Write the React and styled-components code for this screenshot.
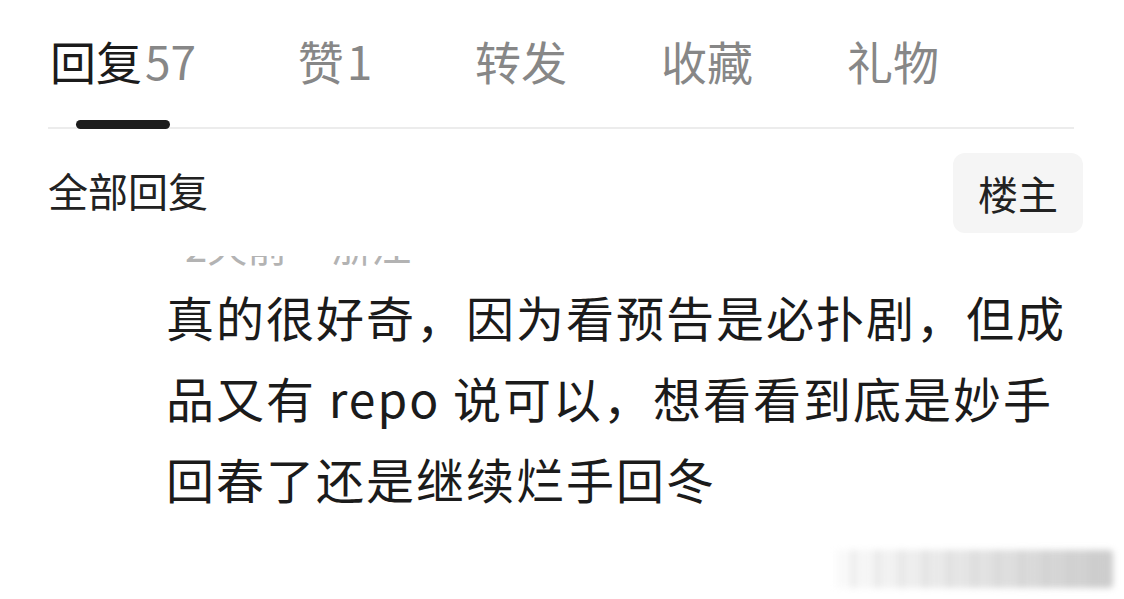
import React from "react";
import styled, { createGlobalStyle } from "styled-components";

const FONT = `"Noto Sans CJK SC", "Noto Sans", sans-serif`;

const tabs = [
	{ label: "回复", count: 57, active: true },
	{ label: "赞", count: 1 },
	{ label: "转发" },
	{ label: "收藏" },
	{ label: "礼物" },
];

const App = () => {
	return (
		<Page>
			<GlobalStyle />
			<TabBar>
				{tabs.map((tab) => (
					<Tab key={tab.label}>
						<TabLabel $active={tab.active}>
							{tab.label}
							{tab.count !== undefined && <Count>{tab.count}</Count>}
						</TabLabel>
						<Indicator $active={tab.active} />
					</Tab>
				))}
			</TabBar>

			<FilterRow>
				<FilterLabel>全部回复</FilterLabel>
				<OwnerButton>楼主</OwnerButton>
			</FilterRow>

			<MetaClip>
				<Meta>
					2天前<Location>浙江</Location>
				</Meta>
			</MetaClip>

			<Comment>
				真的很好奇，因为看预告是必扑剧，但成品又有 repo 说可以，想看看到底是妙手回春了还是继续烂手回冬
			</Comment>

			<Watermark />
		</Page>
	);
};

const GlobalStyle = createGlobalStyle`
	html, body {
		margin: 0;
		padding: 0;
		background: #ffffff;
	}
	body {
		font-family: ${FONT};
	}
`;

const Page = styled.div`
	position: relative;
	width: 1124px;
	height: 599px;
	overflow: hidden;
	background: #ffffff;
	font-family: ${FONT};
`;

const TabBar = styled.div`
	display: flex;
	gap: 92px;
	margin: 0 50px 0 48px;
	padding: 37px 0 0 2px;
	border-bottom: 2px solid #ececec;
`;

const Tab = styled.div`
	display: flex;
	flex-direction: column;
	align-items: center;
`;

const TabLabel = styled.div`
	font-size: 46px;
	line-height: 46px;
	white-space: nowrap;
	color: ${(props) => (props.$active ? "#1b1b1b" : "#878787")};
`;

const Count = styled.span`
	margin-left: 3px;
	color: #878787;
`;

const Indicator = styled.div`
	width: 94px;
	height: 9px;
	margin-top: 37px;
	margin-bottom: -2px;
	border-radius: 5px;
	background: ${(props) => (props.$active ? "#1c1c1c" : "transparent")};
`;

const FilterRow = styled.div`
	display: flex;
	align-items: center;
	justify-content: space-between;
	height: 80px;
	margin: 24px 41px 0 48px;
`;

const FilterLabel = styled.div`
	font-size: 40px;
	line-height: 40px;
	color: #222222;
	margin-bottom: 6px;
`;

const OwnerButton = styled.div`
	display: flex;
	align-items: center;
	justify-content: center;
	width: 130px;
	height: 80px;
	border-radius: 12px;
	background: #f5f5f5;
	font-size: 40px;
	line-height: 40px;
	color: #222222;
`;

const MetaClip = styled.div`
	height: 11px;
	margin: 23px 0 0 185px;
	overflow: hidden;
`;

const Meta = styled.div`
	margin-top: -31px;
	font-size: 40px;
	line-height: 40px;
	color: #b3b3b3;
	white-space: nowrap;
`;

const Location = styled.span`
	margin-left: 44px;
`;

const Comment = styled.p`
	width: 910px;
	margin: 9px 0 0 166px;
	font-size: 48px;
	line-height: 81px;
	letter-spacing: 2px;
	color: #1b1b1b;
`;

const Watermark = styled.div`
	position: absolute;
	left: 835px;
	top: 550px;
	width: 278px;
	height: 38px;
	border-radius: 4px;
	background: repeating-linear-gradient(
			to right,
			rgba(255, 255, 255, 0) 0px,
			rgba(255, 255, 255, 0) 14px,
			rgba(190, 190, 190, 0.25) 18px,
			rgba(255, 255, 255, 0) 24px
		),
		linear-gradient(to right, rgba(235, 235, 235, 0.2), rgba(170, 170, 170, 0.6));
	filter: blur(3px);
`;

export default App;
